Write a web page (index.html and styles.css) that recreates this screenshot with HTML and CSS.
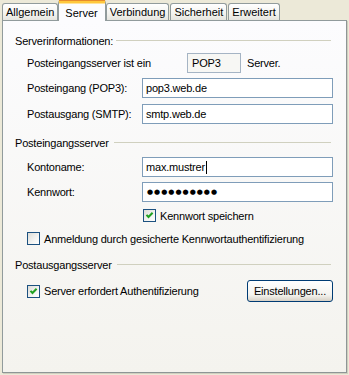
FILE: index.html
```html
<!DOCTYPE html>
<html>
<head>
  <title>Konteneigenschaften</title>
  <link rel="stylesheet" href="styles.css">
</head>
<body>

<div class="dialog">
  <ul class="tabs">
    <li class="tab">Allgemein</li>
    <li class="tab active">Server</li>
    <li class="tab">Verbindung</li>
    <li class="tab">Sicherheit</li>
    <li class="tab">Erweitert</li>
  </ul>

  <div class="page">
    <div class="group-title"><span>Serverinformationen:</span></div>

    <div class="row row-type">
      <span class="type-label">Posteingangsserver ist ein</span>
      <span class="field field-readonly">POP3</span>
      <span>Server.</span>
    </div>

    <div class="row row-field row-pop3">
      <span class="label">Posteingang (POP3):</span>
      <span class="field">pop3.web.de</span>
    </div>

    <div class="row row-field row-smtp">
      <span class="label">Postausgang (SMTP):</span>
      <span class="field">smtp.web.de</span>
    </div>

    <div class="group-title group-in"><span>Posteingangsserver</span></div>

    <div class="row row-field row-account">
      <span class="label">Kontoname:</span>
      <span class="field">max.mustrer<span class="caret"></span></span>
    </div>

    <div class="row row-field row-password">
      <span class="label">Kennwort:</span>
      <span class="field password">●●●●●●●●●●</span>
    </div>

    <div class="row row-check row-remember">
      <span class="checkbox checked">
        <svg width="11" height="11" viewBox="0 0 11 11"><path d="M2.5 4.8 L4.5 7 L8.6 2.8" fill="none" stroke="#21A121" stroke-width="2"/></svg>
      </span>
      <span>Kennwort speichern</span>
    </div>

    <div class="row row-check row-spa">
      <span class="checkbox"></span>
      <span>Anmeldung durch gesicherte Kennwortauthentifizierung</span>
    </div>

    <div class="group-title group-out"><span>Postausgangsserver</span></div>

    <div class="row row-auth">
      <div class="row-check">
        <span class="checkbox checked">
          <svg width="11" height="11" viewBox="0 0 11 11"><path d="M2.5 4.8 L4.5 7 L8.6 2.8" fill="none" stroke="#21A121" stroke-width="2"/></svg>
        </span>
        <span>Server erfordert Authentifizierung</span>
      </div>
      <button class="button">Einstellungen...</button>
    </div>
  </div>
</div>

</body>
</html>
```

FILE: styles.css
```css
body {
  margin: 0;
  background-color: #ECE9D8;
  font-family: "Liberation Sans", Arial, sans-serif;
  font-size: 11px;
  letter-spacing: -0.2px;
  color: #000;
}

.dialog {
  width: 349px;
  height: 375px;
  padding-left: 2px;
  box-sizing: border-box;
}

/* tab strip */

.tabs {
  display: flex;
  align-items: flex-end;
  list-style: none;
  margin: 0;
  padding: 0;
  height: 20px;
}

.tab {
  height: 17px;
  line-height: 16px;
  padding: 0 3px;
  margin-right: 1px;
  box-sizing: border-box;
  border: 1px solid #919B9C;
  border-bottom: none;
  border-radius: 3px 3px 0 0;
  background: linear-gradient(#FFFFFF, #F3F3EF 60%, #E6E5DF);
  letter-spacing: 0;
}

.tab.active {
  position: relative;
  z-index: 1;
  height: 21px;
  margin: 0 0 -1px -1px;
  padding: 2px 7px 0 6px;
  line-height: 17px;
  border-top: 3px solid #FFC83C;
  box-shadow: inset 0 1px 0 #FFE39A;
  background: #FCFCFE;
}

.tab.active::before {
  content: "";
  position: absolute;
  top: -3px;
  left: 0;
  right: 0;
  height: 1px;
  background-color: #E68B2C;
}

/* tab page */

.page {
  width: 345px;
  height: 353px;
  box-sizing: border-box;
  border: 1px solid #919B9C;
  border-right-color: #8E9696;
  border-bottom-color: #8E9696;
  box-shadow: 1px 1px 0 #D0CEBF;
  background: linear-gradient(#FCFCFE, #F4F3EE);
  padding: 13px 13px 0 12px;
}

.group-title {
  display: flex;
  align-items: center;
  height: 14px;
  margin-right: 2px;
}

.group-title::after {
  content: "";
  flex: 1;
  height: 1px;
  margin: -1px 0 0 3px;
  background-color: #D0D0BF;
}

.group-in {
  margin-top: 12px;
}

.group-in::after,
.group-out::after {
  margin-left: 5px;
}

.group-out {
  margin-top: 13px;
}

.row {
  display: flex;
  align-items: center;
  margin-left: 12px;
}

.row-type {
  height: 20px;
  margin-top: 5px;
}

.type-label {
  width: 160px;
}

.row-field {
  height: 20px;
}

.label {
  width: 115px;
  flex-shrink: 0;
}

.row-pop3 {
  margin-top: 5px;
}

.row-smtp {
  margin-top: 6px;
}

.row-account {
  margin-top: 7px;
}

.row-password {
  margin-top: 5px;
}

.field {
  display: flex;
  align-items: center;
  flex: 1;
  height: 20px;
  box-sizing: border-box;
  padding: 0 3px;
  border: 1px solid #7F9DB9;
  background-color: #fff;
}

.field-readonly {
  flex: none;
  width: 54px;
  margin-right: 6px;
  padding-left: 4px;
  border-color: #A5B4C4;
  background-color: #F7F7F4;
}

.caret {
  width: 1px;
  height: 13px;
  margin-left: 1px;
  background-color: #000;
}

.password {
  font-family: "DejaVu Sans", sans-serif;
  font-size: 7px;
  letter-spacing: 1px;
  padding-left: 4px;
}

/* checkboxes */

.row-check {
  display: flex;
  align-items: center;
  height: 13px;
}

.row-remember {
  margin-top: 7px;
  padding-left: 116px;
}

.row-spa {
  margin-top: 10px;
}

.checkbox {
  width: 13px;
  height: 13px;
  box-sizing: border-box;
  margin-right: 4px;
  border: 1px solid #1C5180;
  background: linear-gradient(135deg, #DCDCD7, #F4F4F2 60%, #FFFFFF);
}

.checkbox svg {
  display: block;
}

.row-auth {
  justify-content: space-between;
  height: 22px;
  margin-top: 8px;
}

.button {
  width: 86px;
  height: 22px;
  padding: 0;
  border: 1px solid #003C74;
  border-radius: 3px;
  background: linear-gradient(#FFFFFF, #F4F3EE 70%, #D6D0C5);
  font-family: inherit;
  font-size: 11px;
  letter-spacing: inherit;
  color: #000;
}
```
